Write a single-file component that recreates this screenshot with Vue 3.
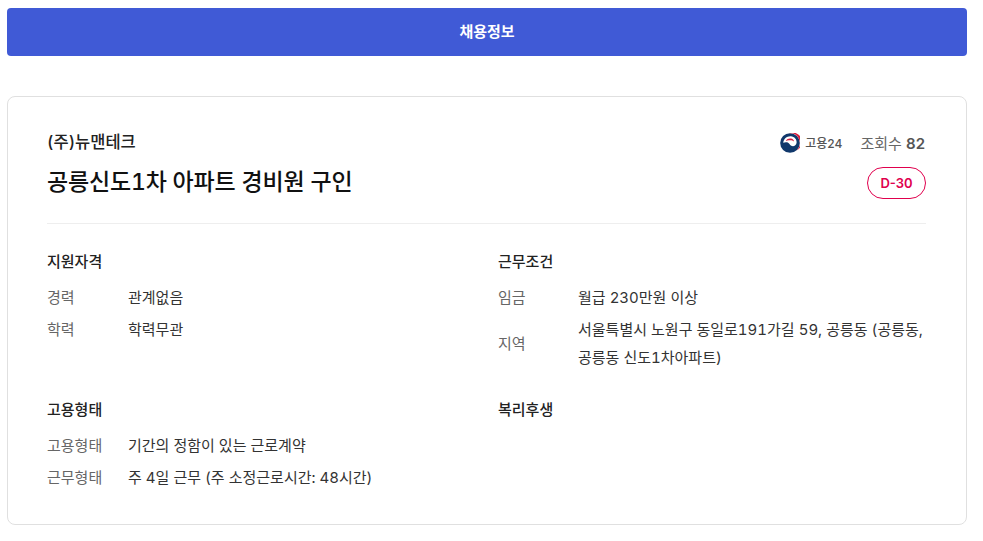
<script setup>
const sections = [
  { title: '지원자격', rows: [['경력', ['관계없음']], ['학력', ['학력무관']]] },
  { title: '근무조건', rows: [['임금', ['월급 230만원 이상']], ['지역', ['서울특별시 노원구 동일로191가길 59, 공릉동 (공릉동,', '공릉동 신도1차아파트)']]] },
  { title: '고용형태', rows: [['고용형태', ['기간의 정함이 있는 근로계약']], ['근무형태', ['주 4일 근무 (주 소정근로시간: 48시간)']]] },
  { title: '복리후생', rows: [] }
]
</script>

<template>
  <div class="page">
    <button class="apply">채용정보</button>
    <section class="card">
      <header class="head">
        <div class="head-left">
          <div class="company">(주)뉴맨테크</div>
          <h1 class="title">공릉신도1차 아파트 경비원 구인</h1>
        </div>
        <div class="head-right">
          <div class="meta">
            <span class="source">
              <svg class="logo" viewBox="0 0 20 20" width="20" height="20">
                <circle cx="10" cy="10" r="9.800" fill="#10386b" />
                <path d="M9 .3A9.800 9.800 0 0 1 16.500 17.400 8.300 8.300 0 0 0 9 .3Z" fill="#d81f3f" />
                <path d="M3.200 9.800C3.600 5.900 7 3 10.800 3.300 14.500 3.600 17 6.500 16.600 9.800 16.200 12.500 13.500 14 11.200 12.800 9.600 12 9.400 10.200 7.800 9.600 6.200 9 4.500 9.300 3.200 9.800Z" fill="#fff" />
                <path d="M5.600 8C6.800 6 9 5.200 11 5.600 12.600 5.900 13.800 7 14 8.400 12.600 7.200 10.600 6.900 9 7.300 7.800 7.500 6.700 7.700 5.600 8Z" fill="#d81f3f" />
              </svg>
              <span class="source-name">고용24</span>
            </span>
            <span class="views"><span class="views-label">조회수</span> <b>82</b></span>
          </div>
          <span class="badge">D-30</span>
        </div>
      </header>
      <div class="grid">
        <div v-for="s in sections" :key="s.title" class="section">
          <h2 class="section-title">{{ s.title }}</h2>
          <div v-for="r in s.rows" :key="r[0]" class="row">
            <span class="label">{{ r[0] }}</span>
            <span class="value"><span v-for="l in r[1]" :key="l" class="line">{{ l }}</span></span>
          </div>
        </div>
      </div>
    </section>
  </div>
</template>

<style>
body { margin: 0; background: #fff; }
</style>

<style scoped>
.page {
  width: 960px;
  padding: 8px 0 0 7px;
  font-family: Inter, "Noto Sans CJK KR", sans-serif;
  font-variant-numeric: tabular-nums;
  color: #222;
}
.apply {
  display: block;
  width: 100%;
  height: 48px;
  padding: 0 0 4px;
  border: 0;
  border-radius: 4px;
  background: #405ad6;
  color: #fff;
  font: 700 15px Inter, "Noto Sans CJK KR", sans-serif;
}
.card {
  margin-top: 40px;
  height: 429px;
  box-sizing: border-box;
  border: 1px solid #e0e0e0;
  border-radius: 8px;
  padding: 32px 40px 0 39px;
}
.head {
  display: flex;
  justify-content: space-between;
  height: 94px;
  border-bottom: 1px solid #eee;
}
.company {
  font-size: 16.500px;
  font-weight: 500;
  line-height: 27px;
  color: #222;
}
.title {
  margin: 10px 0 0;
  font-size: 23px;
  font-weight: 500;
  line-height: 32px;
  letter-spacing: -0.18px;
  color: #111;
}
.head-right {
  display: flex;
  flex-direction: column;
  align-items: flex-end;
}
.meta {
  display: flex;
  align-items: center;
  height: 27px;
  gap: 18px;
  padding-right: 1px;
  font-variant-numeric: normal;
}
.source { display: flex; align-items: center; gap: 5px; }
.logo { display: block; }
.source-name {
  font-size: 12px;
  font-weight: 500;
  color: #555;
}
.views { font-size: 15px; color: #666; }
.views b { font-size: 15px; font-weight: 600; color: #555; }
.badge {
  margin-top: 11px;
  box-sizing: border-box;
  width: 59px;
  height: 32px;
  border: 1px solid #e0004d;
  border-radius: 16px;
  color: #e0004d;
  font-size: 13px;
  font-weight: 600;
  font-variant-numeric: normal;
  line-height: 30px;
  text-align: center;
}
.grid {
  display: grid;
  grid-template-columns: 451px 1fr;
  grid-template-rows: 148px auto;
  padding-top: 25px;
}
.section-title {
  margin: 0 0 9px;
  font-size: 15px;
  font-weight: 500;
  line-height: 26px;
  color: #222;
}
.row {
  display: flex;
  align-items: center;
  margin-bottom: 4px;
  font-size: 15px;
  line-height: 28px;
}
.label { width: 81px; flex: none; color: #666; }
.section:nth-child(even) .label { width: 80px; }
.value { color: #333; }
.line { display: block; }
</style>
